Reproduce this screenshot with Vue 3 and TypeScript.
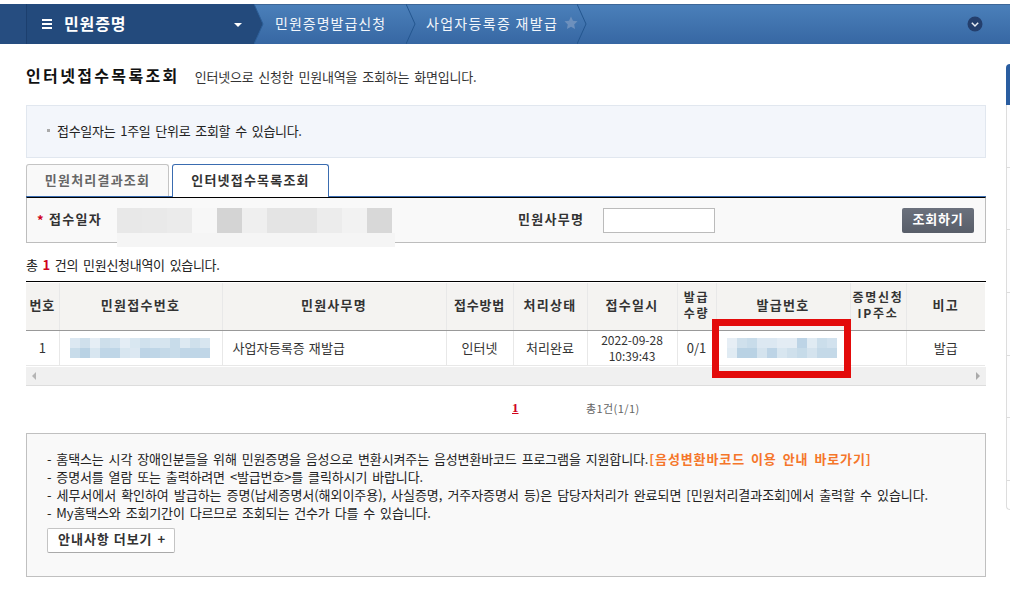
<script setup lang="ts">
const searchBlocks = ['#e8e8e8', '#e9e9e9', '#ebebeb', '#f7f7f7', '#d4d4d4', '#efefef', '#e4e4e4', '#e4e4e4', '#ececec', '#f2f2f2', '#d8d8d8'];

const receiptBlur = [
  '#dce8f2', '#cfe0ec', '#e6eef5', '#cddfeb', '#d2e2ee', '#e4edf5', '#d9e7f1', '#d0e1ed', '#d6e5f0', '#d6e5ef', '#c8dcea', '#dde9f2', '#cfe0ec', '#d8e6f0',
  '#c8dcea', '#b9d2e4', '#d8e6f0', '#bfd6e7', '#bfd6e7', '#d8e6f0', '#dce8f2', '#bdd4e6', '#bfd6e7', '#c4d9e8', '#c8dcea', '#c0d6e7', '#bfd6e7', '#c0d6e7',
];

const issueBlur = [
  '#e6eef5', '#cfe0ec', '#c8dcea', '#dce8f2', '#dce8f2', '#e3ecf4', '#e3ecf4', '#bdd4e6', '#e0ebf3', '#cbdeeb', '#d2e2ee',
  '#e0ebf3', '#b9d2e4', '#b9d2e4', '#d4e3ee', '#bdd4e6', '#d8e6f0', '#cfe0ec', '#c6dbe9', '#d4e3ee', '#c4d9e8', '#c4d9e8',
];
</script>

<template>
  <div class="page">
    <nav class="topbar">
      <div class="head">
        <span class="burger"><i></i><i></i><i></i></span>
        <strong>민원증명</strong>
        <span class="caret"></span>
      </div>
      <svg class="head-tip" width="10" height="40" viewBox="0 0 10 40">
        <polygon points="0,0 9,20 0,40" fill="#234a7c" />
        <polyline points="0,0 9,20 0,40" fill="none" stroke="#2d5f98" stroke-width="1" />
      </svg>
      <span class="crumb first">민원증명발급신청</span>
      <svg class="sep" width="10" height="40" viewBox="0 0 10 40">
        <polyline points="0,0 9,20 0,40" fill="none" stroke="#24568f" stroke-width="1" />
      </svg>
      <span class="crumb second">사업자등록증 재발급</span>
      <svg class="star" width="14" height="14" viewBox="0 0 24 24">
        <path d="M12 1l3.4 7.2 7.8 1-5.7 5.4 1.5 7.8L12 18.6l-7 3.8 1.5-7.8L.8 9.2l7.8-1z" fill="#6d90bd" />
      </svg>
      <svg class="sep third" width="10" height="40" viewBox="0 0 10 40">
        <polyline points="0,0 9,20 0,40" fill="none" stroke="#24568f" stroke-width="1" />
      </svg>
      <svg class="more" width="16" height="16" viewBox="0 0 16 16">
        <circle cx="8" cy="8" r="7.5" fill="#243f6d" />
        <polyline points="4.8,6.8 8,10 11.2,6.8" fill="none" stroke="#e8edf4" stroke-width="1.5" />
      </svg>
    </nav>

    <div class="body">
      <main class="content">
        <header class="title-row">
          <h1>인터넷접수목록조회</h1>
          <p>인터넷으로 신청한 민원내역을 조회하는 화면입니다.</p>
        </header>

        <div class="notice"><i></i>접수일자는 1주일 단위로 조회할 수 있습니다.</div>

        <div class="tabs">
          <button class="tab">민원처리결과조회</button>
          <button class="tab active">인터넷접수목록조회</button>
        </div>

        <section class="search">
          <span class="req">*</span>
          <label class="date-label">접수일자</label>
          <div class="date-blur">
            <span v-for="(c, i) in searchBlocks" :key="i" :style="{ background: c }"></span>
            <div class="date-strip"></div>
          </div>
          <label class="name-label">민원사무명</label>
          <input class="name-input" type="text" />
          <button class="search-btn">조회하기</button>
        </section>

        <p class="total">총 <b>1</b> 건의 민원신청내역이 있습니다.</p>

        <div class="grid-wrap">
          <table>
            <colgroup>
              <col class="c1" /><col class="c2" /><col class="c3" /><col class="c4" /><col class="c5" />
              <col class="c6" /><col class="c7" /><col class="c8" /><col class="c9" /><col class="c10" />
            </colgroup>
            <thead>
              <tr>
                <th class="tight">번호</th>
                <th>민원접수번호</th>
                <th>민원사무명</th>
                <th class="tight">접수방법</th>
                <th>처리상태</th>
                <th>접수일시</th>
                <th class="two-line">발급<br />수량</th>
                <th>발급번호</th>
                <th class="two-line">증명신청<br />IP주소</th>
                <th>비고</th>
              </tr>
            </thead>
            <tbody>
              <tr>
                <td>1</td>
                <td>
                  <div class="blur receipt">
                    <span v-for="(c, i) in receiptBlur" :key="i" :style="{ background: c }"></span>
                  </div>
                </td>
                <td class="left">사업자등록증 재발급</td>
                <td>인터넷</td>
                <td>처리완료</td>
                <td class="stamp">2022-09-28<br />10:39:43</td>
                <td>0/1</td>
                <td>
                  <div class="blur issue">
                    <span v-for="(c, i) in issueBlur" :key="i" :style="{ background: c }"></span>
                  </div>
                </td>
                <td></td>
                <td>발급</td>
              </tr>
            </tbody>
          </table>
          <div class="hscroll">
            <span class="arrow l"></span>
            <span class="arrow r"></span>
          </div>
          <div class="highlight"></div>
        </div>

        <div class="pager">
          <a class="current">1</a>
          <span class="count">총1건(1/1)</span>
        </div>

        <section class="info">
          <p>- 홈택스는 시각 장애인분들을 위해 민원증명을 음성으로 변환시켜주는 음성변환바코드 프로그램을 지원합니다.<a>[음성변환바코드 이용 안내 바로가기]</a></p>
          <p>- 증명서를 열람 또는 출력하려면 &lt;발급번호&gt;를 클릭하시기 바랍니다.</p>
          <p class="long">- 세무서에서 확인하여 발급하는 증명(납세증명서(해외이주용), 사실증명, 거주자증명서 등)은 담당자처리가 완료되면 [민원처리결과조회]에서 출력할 수 있습니다.</p>
          <p>- My홈택스와 조회기간이 다르므로 조회되는 건수가 다를 수 있습니다.</p>
          <button class="more-btn">안내사항 더보기<span>+</span></button>
        </section>
      </main>

      <aside class="rail">
        <div class="rail-top"></div>
        <div v-for="n in 6" :key="n" class="rail-item"></div>
        <div class="rail-end"></div>
      </aside>
    </div>
  </div>
</template>

<style scoped>
.page {
  width: 1010px;
  height: 611px;
  overflow: hidden;
  padding-top: 4px;
  box-sizing: border-box;
  background: #fff;
  color: #333;
  font-family: "Noto Sans CJK KR", "Liberation Sans", sans-serif;
  font-size: 13px;
  line-height: 18px;
}

/* top bar */
.topbar {
  display: flex;
  align-items: center;
  height: 40px;
  background: linear-gradient(#4b80ba, #3767a3);
  box-shadow: inset 0 1px 0 #3d6798;
  color: #fff;
}

.head {
  display: flex;
  align-items: center;
  width: 228px;
  height: 40px;
  margin-left: 26px;
  box-sizing: border-box;
  padding-left: 15px;
  background: #234a7c;
  border-left: 1px solid #1c3f6e;
  box-shadow: -26px 0 0 #264d80;
}

.burger {
  display: flex;
  flex-direction: column;
  gap: 2px;
  width: 10px;
}

.burger i {
  display: block;
  height: 2px;
  background: #fff;
}

.head strong {
  margin-left: 12px;
  margin-top: -2px;
  font-size: 16px;
  font-weight: 700;
  letter-spacing: .9px;
}

.caret {
  margin-left: 108px;
  margin-top: 2px;
  border-left: 4px solid transparent;
  border-right: 4px solid transparent;
  border-top: 4px solid #fff;
}

.head-tip,
.sep {
  flex: none;
}

.crumb {
  font-size: 14px;
  color: #f2f6fb;
  white-space: nowrap;
  margin-top: -2px;
}

.crumb.first {
  margin-left: 11px;
  width: 131px;
  letter-spacing: 1px;
}

.crumb.second {
  margin-left: 10px;
  letter-spacing: 1.3px;
  width: 132px;
}

.star {
  margin-left: 6px;
  margin-top: -3px;
}

.sep.third {
  margin-left: -1px;
}

.more {
  margin-left: auto;
  margin-right: 27px;
}

/* page body */
.body {
  display: flex;
}

.content {
  width: 960px;
  margin-left: 26px;
}

.title-row {
  display: flex;
  align-items: baseline;
  height: 24px;
  margin-top: 20px;
  margin-bottom: 17px;
}

h1 {
  margin: 0;
  font-size: 16px;
  font-weight: 700;
  letter-spacing: 2.35px;
  color: #111;
  line-height: 22px;
  white-space: nowrap;
}

.title-row p {
  margin: 0 0 0 15px;
  letter-spacing: -.2px;
  word-spacing: 2.2px;
  white-space: nowrap;
}

.notice {
  display: flex;
  align-items: center;
  height: 53px;
  box-sizing: border-box;
  padding-left: 20px;
  padding-bottom: 2px;
  background: #f3f6fb;
  border: 1px solid #e1e7ef;
  letter-spacing: -.3px;
  word-spacing: 2.3px;
  color: #222;
}

.notice i {
  width: 3px;
  height: 3px;
  margin-right: 7px;
  background: #aaa;
}

.tabs {
  display: flex;
  gap: 3px;
  height: 33px;
  margin-top: 6px;
  box-sizing: border-box;
  border-bottom: 1px solid #3a6cb0;
}

.tab {
  width: 143px;
  height: 32px;
  padding: 0 0 2px;
  font: 700 13px/18px "Noto Sans CJK KR", sans-serif;
  letter-spacing: 1.2px;
  color: #666;
  background: #f9f9f9;
  border: 1px solid #c4c4c4;
  border-bottom: 0;
  border-radius: 3px 3px 0 0;
}

.tab.active {
  width: 157px;
  height: 33px;
  color: #333;
  background: #fff;
  border-color: #3a6cb0;
}

.search {
  display: flex;
  align-items: center;
  height: 46px;
  box-sizing: border-box;
  padding-left: 10px;
  padding-right: 11px;
  background: #f9f9f9;
  border: 1px solid #bdbdbd;
  border-top-color: #000;
}

.req {
  width: 12px;
  color: #d0021b;
  font-weight: 700;
}

.date-label,
.name-label {
  margin-top: -2px;
  font-weight: 700;
  letter-spacing: 1.28px;
  color: #333;
  white-space: nowrap;
}

.date-label {
  width: 68px;
}

.date-blur {
  position: relative;
  display: flex;
  width: 275px;
  height: 25px;
}

.date-blur span {
  flex: none;
  width: 25px;
  height: 25px;
}

.date-strip {
  position: absolute;
  left: 0;
  top: 25px;
  width: 278px;
  height: 14px;
  background: #f5f5f5;
}

.name-label {
  margin-left: 126px;
  width: 85px;
}

.name-input {
  width: 112px;
  height: 25px;
  padding: 0;
  box-sizing: border-box;
  background: #fff;
  border: 1px solid #bbb;
}

.search-btn {
  width: 72px;
  height: 25px;
  margin-left: auto;
  padding: 0 0 2px;
  font: 700 13px/18px "Noto Sans CJK KR", sans-serif;
  letter-spacing: .8px;
  color: #fff;
  background: linear-gradient(#6b717d, #585e69);
  border: 0;
  border-radius: 2px;
}

.total {
  height: 18px;
  margin: 13px 0 7px;
  letter-spacing: -.3px;
  word-spacing: 2.3px;
  color: #222;
}

.total b {
  color: #d0021b;
}

/* result table */
.grid-wrap {
  position: relative;
  border-top: 1px solid #000;
}

table {
  width: 959px;
  margin-top: 1px;
  table-layout: fixed;
  border-collapse: collapse;
}

.c1 { width: 33px; }
.c2 { width: 163px; }
.c3 { width: 224px; }
.c4 { width: 67px; }
.c5 { width: 74px; }
.c6 { width: 90px; }
.c7 { width: 39px; }
.c8 { width: 134px; }
.c9 { width: 56px; }
.c10 { width: 79px; }

th {
  height: 47px;
  padding: 0 0 2px;
  box-sizing: border-box;
  font-size: 13px;
  font-weight: 700;
  line-height: 16px;
  letter-spacing: 1.28px;
  color: #333;
  background: #f4f3f1;
  border-left: 1px solid #e8e8e8;
  border-bottom: 1px solid #999;
  white-space: nowrap;
}

th.tight {
  letter-spacing: .78px;
}

th.two-line {
  font-size: 12px;
  letter-spacing: 1.7px;
}

td {
  height: 34px;
  padding: 0;
  text-align: center;
  border-left: 1px solid #e8e8e8;
  border-bottom: 1px solid #e8e8e8;
  white-space: nowrap;
}

th:first-child,
td:first-child {
  border-left: 0;
}

td.left {
  padding-left: 10px;
  text-align: left;
  letter-spacing: .1px;
  word-spacing: 1px;
}

td.stamp {
  font-size: 12px;
  line-height: 16px;
}

.blur {
  display: grid;
  grid-template-rows: 10px 10px;
  grid-auto-flow: row;
  height: 20px;
}

.blur.receipt {
  grid-template-columns: repeat(14, 10px);
  margin-left: 10px;
}

.blur.issue {
  grid-template-columns: repeat(11, 10px);
  margin-left: 10px;
}

.hscroll {
  display: flex;
  align-items: center;
  justify-content: space-between;
  height: 18px;
  margin-top: 1px;
  padding: 0 6px;
  background: #f0f0f0;
  border-bottom: 1px solid #ddd;
}

.arrow {
  border-top: 4px solid transparent;
  border-bottom: 4px solid transparent;
}

.arrow.l {
  border-right: 4px solid #b5b5b5;
}

.arrow.r {
  border-left: 4px solid #aaa;
}

.highlight {
  position: absolute;
  left: 686px;
  top: 37px;
  width: 139px;
  height: 59px;
  box-sizing: border-box;
  border: 7px solid #e30b0b;
}

.pager {
  display: flex;
  align-items: center;
  height: 47px;
  box-sizing: border-box;
  padding-left: 486px;
  padding-bottom: 3px;
}

.current {
  width: 74px;
  font-family: "Liberation Serif", serif;
  font-size: 13px;
  font-weight: 700;
  color: #d0021b;
  text-decoration: underline;
}

.count {
  font-size: 11px;
  letter-spacing: .4px;
  color: #666;
}

/* info box */
.info {
  height: 144px;
  box-sizing: border-box;
  padding: 16px 20px 0;
  background: #f9f9f9;
  border: 1px solid #c0c0c0;
}

.info p {
  margin: 0;
  height: 18px;
  letter-spacing: -.14px;
  word-spacing: 2.2px;
  color: #222;
  white-space: nowrap;
}

.info p.long {
  letter-spacing: -.05px;
}

.info a {
  margin-left: 1px;
  font-weight: 700;
  letter-spacing: .88px;
  color: #f5762a;
}

.more-btn {
  display: flex;
  align-items: center;
  width: 128px;
  height: 25px;
  margin-top: 6px;
  padding: 0 0 2px 10px;
  font: 700 13px/18px "Noto Sans CJK KR", sans-serif;
  letter-spacing: .98px;
  color: #333;
  background: #fff;
  border: 1px solid #c4c4c4;
  border-bottom-color: #aaa;
  border-radius: 2px;
}

.more-btn span {
  margin-left: 5px;
}

/* right rail */
.rail {
  width: 4px;
  margin-top: 20px;
  margin-left: 20px;
}

.rail-top {
  height: 41px;
  background: #2a5da0;
  border-radius: 4px 0 0 0;
}

.rail-item {
  height: 62.67px;
  box-sizing: border-box;
  background: #fdfdfe;
  border-left: 1px solid #ddd;
  border-bottom: 1px solid #ddd;
}

.rail-end {
  height: 29px;
  box-sizing: border-box;
  border-left: 1px solid #ddd;
  border-bottom: 1px solid #ddd;
  border-radius: 0 0 0 4px;
}
</style>
